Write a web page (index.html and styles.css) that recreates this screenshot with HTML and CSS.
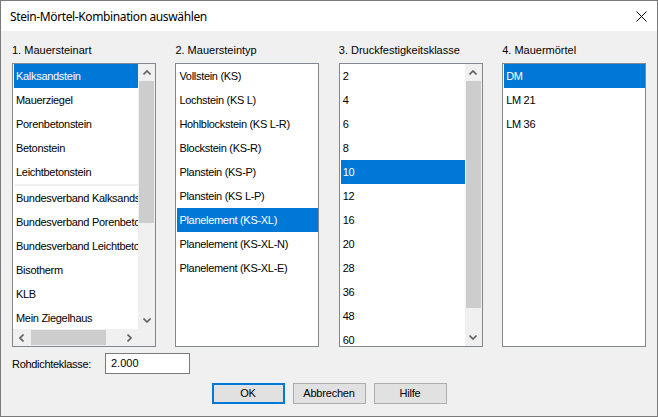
FILE: index.html
```html
<!DOCTYPE html>
<html lang="de">
<head>
<meta charset="utf-8">
<title>Stein-Mörtel-Kombination auswählen</title>
<link rel="stylesheet" href="styles.css">
</head>
<body>
<div class="window">
  <div class="titlebar">
    <span class="title">Stein-Mörtel-Kombination auswählen</span>
    <svg class="close" width="11" height="11" viewBox="0 0 11 11"><path d="M0.5 0.5L10.5 10.5M10.5 0.5L0.5 10.5" stroke="#000" stroke-width="1"/></svg>
  </div>
  <div class="content">
    <div class="columns">
      <div class="col">
        <div class="label">1. Mauersteinart</div>
        <div class="listbox with-v with-h">
          <div class="items">
            <div class="item selected">Kalksandstein</div>
            <div class="item">Mauerziegel</div>
            <div class="item">Porenbetonstein</div>
            <div class="item">Betonstein</div>
            <div class="item">Leichtbetonstein</div>
            <div class="sep"></div>
            <div class="item">Bundesverband Kalksandstein</div>
            <div class="item">Bundesverband Porenbetonstein</div>
            <div class="item">Bundesverband Leichtbetonstein</div>
            <div class="item">Bisotherm</div>
            <div class="item">KLB</div>
            <div class="item">Mein Ziegelhaus</div>
            <div class="item">Poroton</div>
          </div>
          <div class="vscroll">
            <div class="sbtn"><svg width="8" height="5" viewBox="0 0 8 5"><path d="M0.5 4.5L4 1L7.5 4.5" fill="none" stroke="#606060" stroke-width="1.6"/></svg></div>
            <div class="track"><div class="vthumb thumb1"></div></div>
            <div class="sbtn"><svg width="8" height="5" viewBox="0 0 8 5"><path d="M0.5 0.5L4 4L7.5 0.5" fill="none" stroke="#606060" stroke-width="1.6"/></svg></div>
          </div>
          <div class="hscroll">
            <div class="sbtn"><svg width="5" height="8" viewBox="0 0 5 8"><path d="M4.5 0.5L1 4L4.5 7.5" fill="none" stroke="#606060" stroke-width="1.6"/></svg></div>
            <div class="htrack"><div class="hthumb"></div></div>
            <div class="sbtn"><svg width="5" height="8" viewBox="0 0 5 8"><path d="M0.5 0.5L4 4L0.5 7.5" fill="none" stroke="#606060" stroke-width="1.6"/></svg></div>
          </div>
          <div class="corner"></div>
        </div>
      </div>
      <div class="col">
        <div class="label">2. Mauersteintyp</div>
        <div class="listbox">
          <div class="items">
            <div class="item">Vollstein (KS)</div>
            <div class="item">Lochstein (KS L)</div>
            <div class="item">Hohlblockstein (KS L-R)</div>
            <div class="item">Blockstein (KS-R)</div>
            <div class="item">Planstein (KS-P)</div>
            <div class="item">Planstein (KS L-P)</div>
            <div class="item selected">Planelement (KS-XL)</div>
            <div class="item">Planelement (KS-XL-N)</div>
            <div class="item">Planelement (KS-XL-E)</div>
          </div>
        </div>
      </div>
      <div class="col">
        <div class="label">3. Druckfestigkeitsklasse</div>
        <div class="listbox with-v">
          <div class="items">
            <div class="item">2</div>
            <div class="item">4</div>
            <div class="item">6</div>
            <div class="item">8</div>
            <div class="item selected">10</div>
            <div class="item">12</div>
            <div class="item">16</div>
            <div class="item">20</div>
            <div class="item">28</div>
            <div class="item">36</div>
            <div class="item">48</div>
            <div class="item">60</div>
          </div>
          <div class="vscroll">
            <div class="sbtn"><svg width="8" height="5" viewBox="0 0 8 5"><path d="M0.5 4.5L4 1L7.5 4.5" fill="none" stroke="#606060" stroke-width="1.6"/></svg></div>
            <div class="track"><div class="vthumb thumb3"></div></div>
            <div class="sbtn"><svg width="8" height="5" viewBox="0 0 8 5"><path d="M0.5 0.5L4 4L7.5 0.5" fill="none" stroke="#606060" stroke-width="1.6"/></svg></div>
          </div>
        </div>
      </div>
      <div class="col">
        <div class="label">4. Mauermörtel</div>
        <div class="listbox">
          <div class="items">
            <div class="item selected">DM</div>
            <div class="item">LM 21</div>
            <div class="item">LM 36</div>
          </div>
        </div>
      </div>
    </div>
    <div class="density">
      <span class="density-label">Rohdichteklasse:</span>
      <div class="textbox">2.000</div>
    </div>
    <div class="buttons">
      <div class="button default">OK</div>
      <div class="button">Abbrechen</div>
      <div class="button">Hilfe</div>
    </div>
  </div>
</div>
</body>
</html>
```

FILE: styles.css
```css
* { box-sizing: border-box; }

html, body {
  margin: 0;
  padding: 0;
  background: #f0f0f0;
}

.window {
  width: 658px;
  height: 417px;
  border: 1px solid #7a7a7a;
  background: #f0f0f0;
  display: flex;
  flex-direction: column;
  font-family: "Liberation Sans", Arial, sans-serif;
  font-size: 11px;
  color: #000;
}

.titlebar {
  height: 30px;
  background: #fff;
  display: flex;
  align-items: center;
  justify-content: space-between;
  padding: 0 10px 0 9px;
  flex-shrink: 0;
}

.title {
  font-family: "Noto Sans", sans-serif;
  font-size: 12px;
  letter-spacing: -0.38px;
  color: #000;
  padding-top: 1px;
}

.close {
  display: block;
  margin-top: 1px;
}

.content {
  padding: 11px 0 0 11px;
  display: flex;
  flex-direction: column;
}

.columns {
  display: grid;
  grid-template-columns: 144px 144px 144px 144px;
  column-gap: 19.4px;
}

.label {
  height: 16px;
  line-height: 16px;
  margin-bottom: 5px;
  white-space: nowrap;
}

.listbox {
  height: 284px;
  border: 1px solid #828790;
  background: #fff;
  display: grid;
  grid-template-columns: 1fr;
  grid-template-rows: 1fr;
  overflow: hidden;
}

.listbox.with-v {
  grid-template-columns: 1fr 17px;
}

.listbox.with-h {
  grid-template-rows: 1fr 17px;
}

.items {
  overflow: hidden;
  min-width: 0;
  min-height: 0;
}

.item {
  height: 24px;
  line-height: 24px;
  margin-left: 1px;
  padding-left: 2px;
  white-space: nowrap;
  overflow: hidden;
  letter-spacing: -0.3px;
}

.item.selected {
  background: #0078d7;
  color: #fff;
}

.sep {
  height: 2px;
  margin-left: 1px;
  background: #f0f0f0;
}

.vscroll {
  background: #f0f0f0;
  display: flex;
  flex-direction: column;
}

.sbtn {
  width: 17px;
  height: 17px;
  flex-shrink: 0;
  display: flex;
  align-items: center;
  justify-content: center;
}

.track {
  flex: 1;
  padding: 0 1px;
}

.vthumb {
  background: #cdcdcd;
}

.thumb1 { height: 142px; }
.thumb3 { height: 227px; }

.hscroll {
  background: #f0f0f0;
  display: flex;
  flex-direction: row;
}

.htrack {
  flex: 1;
  padding: 1px 0 1px 1px;
}

.hthumb {
  width: 75px;
  height: 100%;
  background: #cdcdcd;
}

.corner {
  background: #f0f0f0;
}

.density {
  display: flex;
  align-items: center;
  margin-top: 6px;
  height: 21px;
}

.density-label {
  width: 93px;
  letter-spacing: -0.3px;
}

.textbox {
  width: 85px;
  height: 21px;
  border: 1px solid #7a7a7a;
  background: #fff;
  padding-left: 5px;
  line-height: 19px;
}

.buttons {
  display: flex;
  justify-content: center;
  gap: 8px;
  margin-top: 9px;
  margin-left: -11px;
}

.button {
  width: 73px;
  height: 21px;
  border: 1px solid #adadad;
  background: #e1e1e1;
  text-align: center;
  line-height: 19px;
  letter-spacing: -0.2px;
}

.button.default {
  border: 2px solid #0078d7;
  line-height: 17px;
}
```
